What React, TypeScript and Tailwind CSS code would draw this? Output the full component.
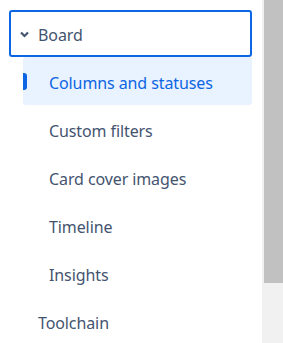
const subItems = ['Custom filters', 'Card cover images', 'Timeline', 'Insights'];

export default function App() {
  return (
    <div className="flex h-[343px] w-[283px] overflow-hidden bg-white font-['Noto_Sans',sans-serif] text-[16px] tracking-[-0.1px] text-[#44546f]">
      <div className="w-[262px] pl-[9px] pt-[10px]">
        {/* Expanded group header */}
        <div className="flex h-[47px] w-[243px] items-center rounded-[3px] border-2 border-[#0c66e4] pl-[9px] pt-[2px]">
          <svg width="9" height="7" viewBox="0 0 9 7" className="mr-[9px]">
            <path d="M1 1.5 L4.5 5 L8 1.5" fill="none" stroke="#44546f" strokeWidth="2.2" />
          </svg>
          <span>Board</span>
        </div>

        <div className="ml-[14px] w-[229px]">
          <div className="relative flex h-[48px] items-center rounded-[3px] bg-[#e9f2ff] pl-[26px] pt-[3px] text-[#0c66e4]">
            <span className="absolute left-0 top-[16px] h-[17px] w-[4px] rounded-r-[3px] bg-[#0c66e4]" />
            Columns and statuses
          </div>
          {subItems.map((item) => (
            <div key={item} className="flex h-[48px] items-center pl-[26px] pt-[3px]">
              {item}
            </div>
          ))}
        </div>

        <div className="flex h-[48px] items-center pl-[29px] pt-[3px]">Toolchain</div>
      </div>

      {/* Scrollbar */}
      <div className="flex w-[21px] bg-[#f1f1f1]">
        <div className="ml-[2px] h-[283px] w-[19px] bg-[#c1c1c1]" />
      </div>
    </div>
  );
}
